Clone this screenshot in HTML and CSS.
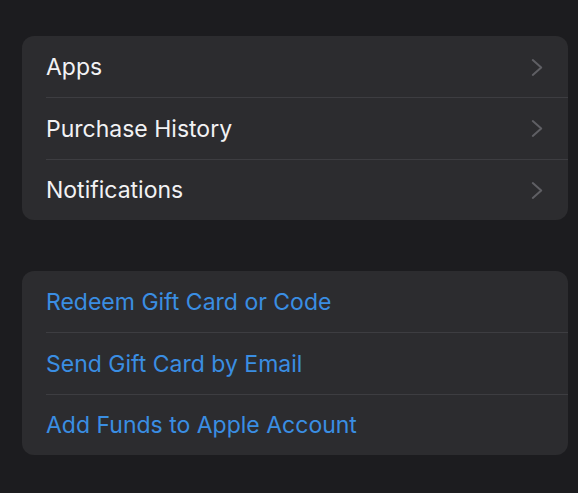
FILE: index.html
```html
<!DOCTYPE html>
<html>
<head>
<meta charset="utf-8">
<link rel="stylesheet" href="styles.css">
</head>
<body>
<div class="page">
  <div class="group">
    <div class="row"><span class="label">Apps</span><svg class="chev" viewBox="0 0 12 18"><path d="M2 2 L10 9 L2 16" /></svg></div>
    <div class="row"><span class="label">Purchase History</span><svg class="chev" viewBox="0 0 12 18"><path d="M2 2 L10 9 L2 16" /></svg></div>
    <div class="row"><span class="label">Notifications</span><svg class="chev" viewBox="0 0 12 18"><path d="M2 2 L10 9 L2 16" /></svg></div>
  </div>
  <div class="group">
    <div class="row"><span class="label link">Redeem Gift Card or Code</span></div>
    <div class="row"><span class="label link">Send Gift Card by Email</span></div>
    <div class="row"><span class="label link">Add Funds to Apple Account</span></div>
  </div>
</div>
</body>
</html>
```
FILE: styles.css
```css
html, body { margin: 0; padding: 0; }
body {
  background: #1c1c1f;
  font-family: Inter, "Noto Sans", sans-serif;
  width: 578px;
  height: 493px;
  overflow: hidden;
}
.page {
  display: flex;
  flex-direction: column;
  gap: 51px;
  padding: 36px 10px 0 22px;
}
.group {
  background: #2c2c2f;
  border-radius: 12px;
  overflow: hidden;
}
.row {
  height: 61.5px;
  display: flex;
  align-items: center;
  justify-content: space-between;
  margin-left: 24px;
  padding: 1px 24px 0 0;
  border-top: 1px solid #3d3d41;
  box-sizing: border-box;
}
.row:first-child { border-top: none; height: 61px; }
.label {
  color: #f2f2f4;
  font-size: 23px;
  letter-spacing: 0;
}
.link { color: #3a8ee3; }
.chev {
  width: 14px;
  height: 19px;
  fill: none;
  stroke: #5f5f64;
  stroke-width: 1.9;
  stroke-linecap: round;
  stroke-linejoin: round;
}
```
